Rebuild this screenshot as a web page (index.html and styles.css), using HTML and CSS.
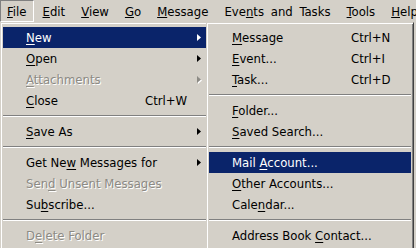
FILE: index.html
```html
<!DOCTYPE html>
<html lang="en">

<head>
    <meta charset="UTF-8">
    <title>File menu</title>
    <link rel="stylesheet" href="styles.css">
</head>

<body>
    <div class="menubar">
        <span class="top-item pressed"><u>F</u>ile</span>
        <span class="top-item"><u>E</u>dit</span>
        <span class="top-item"><u>V</u>iew</span>
        <span class="top-item"><u>G</u>o</span>
        <span class="top-item"><u>M</u>essage</span>
        <span class="top-item">Eve<u>n</u>ts and Tasks</span>
        <span class="top-item"><u>T</u>ools</span>
        <span class="top-item"><u>H</u>elp</span>
    </div>

    <div class="dropdowns">
        <div class="menu main-menu">
            <div class="item active">
                <span><u>N</u>ew</span><span></span>
                <svg class="arrow" width="4" height="7" viewBox="0 0 4 7"><polygon points="0,0 4,3.5 0,7" /></svg>
            </div>
            <div class="item">
                <span><u>O</u>pen</span><span></span>
                <svg class="arrow" width="4" height="7" viewBox="0 0 4 7"><polygon points="0,0 4,3.5 0,7" /></svg>
            </div>
            <div class="item disabled">
                <span><u>A</u>ttachments</span><span></span>
                <svg class="arrow" width="4" height="7" viewBox="0 0 4 7"><polygon points="0,0 4,3.5 0,7" /></svg>
            </div>
            <div class="item">
                <span><u>C</u>lose</span><span class="key">Ctrl+W</span>
            </div>
            <div class="sep"></div>
            <div class="item">
                <span><u>S</u>ave As</span><span></span>
                <svg class="arrow" width="4" height="7" viewBox="0 0 4 7"><polygon points="0,0 4,3.5 0,7" /></svg>
            </div>
            <div class="sep"></div>
            <div class="item">
                <span>Get Ne<u>w</u> Messages for</span><span></span>
                <svg class="arrow" width="4" height="7" viewBox="0 0 4 7"><polygon points="0,0 4,3.5 0,7" /></svg>
            </div>
            <div class="item disabled">
                <span>Sen<u>d</u> Unsent Messages</span>
            </div>
            <div class="item">
                <span>Su<u>b</u>scribe...</span>
            </div>
            <div class="sep"></div>
            <div class="item disabled">
                <span>D<u>e</u>lete Folder</span>
            </div>
        </div>

        <div class="menu sub-menu">
            <div class="item">
                <span><u>M</u>essage</span><span class="key">Ctrl+N</span>
            </div>
            <div class="item">
                <span><u>E</u>vent...</span><span class="key">Ctrl+I</span>
            </div>
            <div class="item">
                <span><u>T</u>ask...</span><span class="key">Ctrl+D</span>
            </div>
            <div class="sep"></div>
            <div class="item">
                <span><u>F</u>older...</span>
            </div>
            <div class="item">
                <span><u>S</u>aved Search...</span>
            </div>
            <div class="sep"></div>
            <div class="item active">
                <span>Mail <u>A</u>ccount...</span>
            </div>
            <div class="item">
                <span><u>O</u>ther Accounts...</span>
            </div>
            <div class="item">
                <span>Cale<u>n</u>dar...</span>
            </div>
            <div class="sep"></div>
            <div class="item">
                <span>Address Book <u>C</u>ontact...</span>
            </div>
        </div>
    </div>
</body>

</html>
```

FILE: styles.css
```css
body {
    margin: 0;
    width: 416px;
    height: 248px;
    overflow: hidden;
    position: relative;
    background-color: #d4d0c8;
    font-family: "DejaVu Sans Condensed", "DejaVu Sans", sans-serif;
    font-stretch: condensed;
    font-size: 13px;
    color: #000;
}

.menubar {
    display: flex;
    gap: 2px;
    height: 22px;
    white-space: nowrap;
    word-spacing: 3px;
}

.top-item {
    padding: 1px 6px 0;
    line-height: 20px;
    border: 1px solid transparent;
}

.top-item.pressed {
    border-color: #808080 #fff #fff #808080;
}

.dropdowns {
    position: absolute;
    top: 22px;
    left: 0;
    display: flex;
    align-items: flex-start;
}

.menu {
    box-sizing: border-box;
    background-color: #d4d0c8;
    border: 1px solid;
    border-color: #d4d0c8 #404040 #404040 #d4d0c8;
    box-shadow: inset 1px 1px #fff, inset -1px -1px #808080;
    padding: 4px 2px;
}

.main-menu {
    width: 209px;
}

.sub-menu {
    width: 208px;
    margin-left: -3px;
}

.item {
    display: grid;
    grid-template-columns: 119px 1fr 4px;
    align-items: center;
    height: 21px;
    padding: 0 5px 0 23px;
    white-space: nowrap;
}

.item u {
    text-underline-offset: 2px;
}

.item.active {
    background-color: #0a246a;
    color: #fff;
}

.item.disabled {
    color: #8c8a84;
    text-shadow: 1px 1px 0 #fff;
}

.arrow {
    fill: currentColor;
}

.item.disabled .arrow {
    filter: drop-shadow(1px 1px 0 #fff);
}

.sep {
    display: flex;
    align-items: center;
    height: 10px;
}

.sep::before {
    content: "";
    flex: 1;
    border-top: 1px solid #808080;
    border-bottom: 1px solid #fff;
}
```
